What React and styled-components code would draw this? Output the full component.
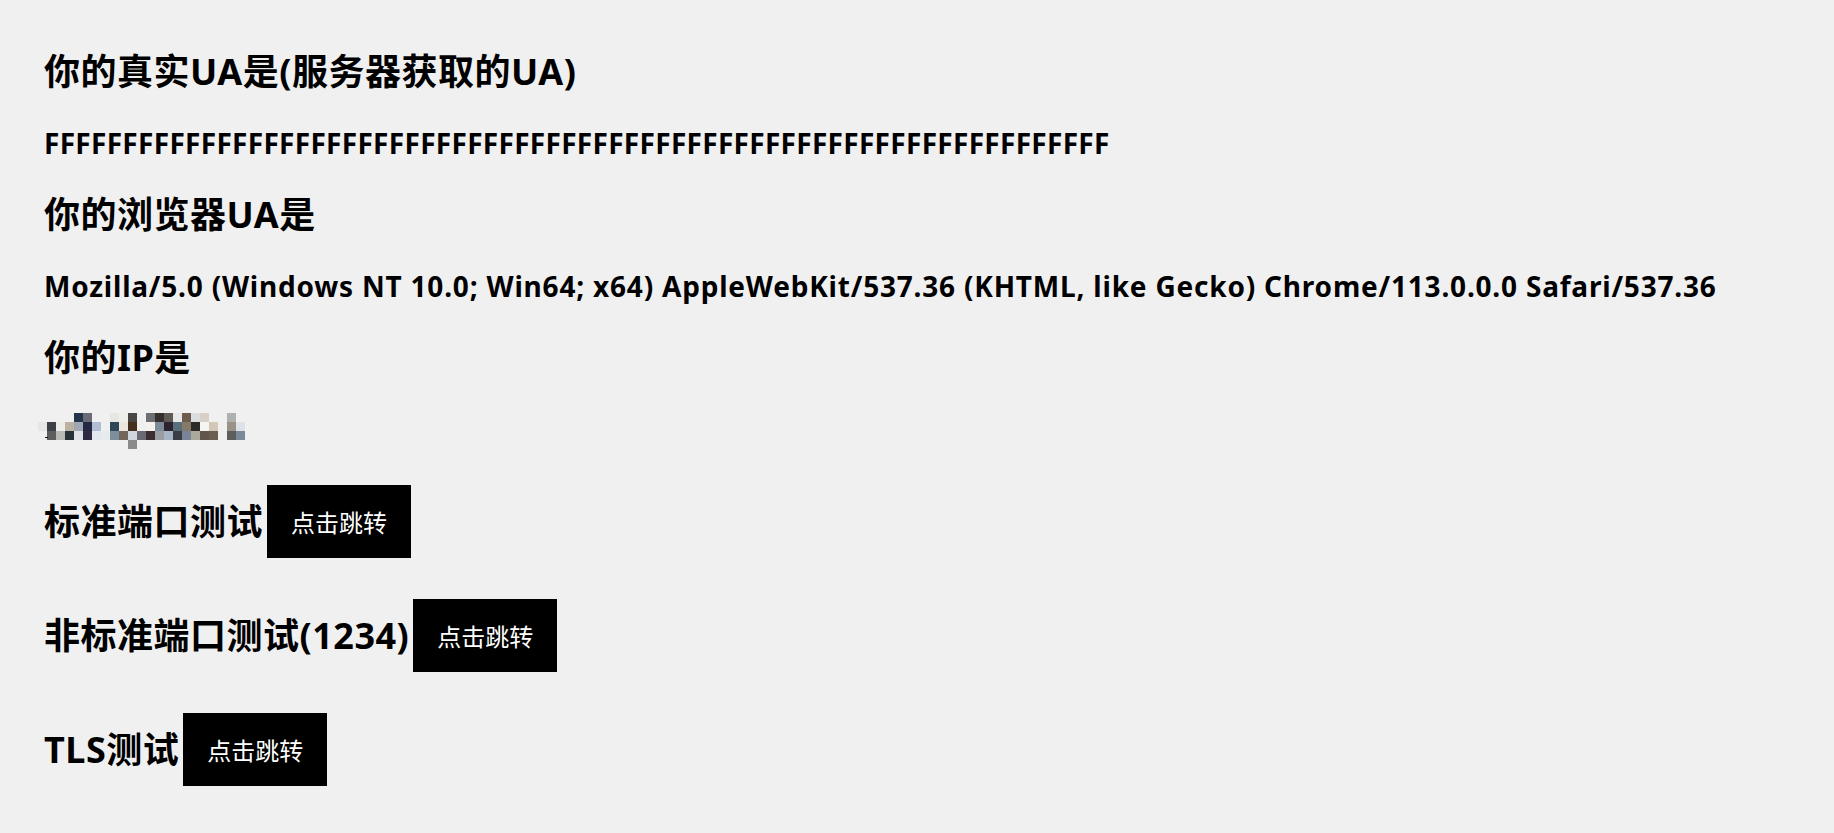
import React from "react";
import styled, { createGlobalStyle } from "styled-components";

const GlobalStyle = createGlobalStyle`
  body {
    margin: 0;
    background: #f0f0f0;
    color: #000;
    font-family: "Noto Sans", "Noto Sans CJK SC", sans-serif;
  }
`;

// pixelated (mosaic) ip address, one entry per 9px block
const mosaic = [
  [null, null, null, null, "#22354a", "#6a6b78", null, null, "#e6e6e4", "#efeee8", "#4a4644", null, "#6c7075", "#35302c", "#5e5a55", "#e8e8e8", "#6c5d4f", "#d9dde0", "#d8cfc6", null, null, "#b0b0b0", null],
  ["#e6e6e6", "#3c4047", "#ececea", "#bdb1a3", "#a0a8b4", "#242842", "#b2bcd4", null, "#2d4858", "#ece6dc", "#45301f", null, "#f5f2ee", "#7d8c99", "#2c2230", "#5a6f7c", "#857a6a", "#2b2b2a", "#f4f4f2", "#d3c7b7", null, "#9a9188", "#dce2e8"],
  [null, "#5e5e5e", "#b9b9b5", "#283038", "#dfe3e8", "#2d2a42", "#e2e8ee", "#e6ebee", "#7c8e9a", "#72665a", "#d0d6de", "#6a6a74", "#3c2e30", "#9a9ea2", "#a8b4c8", "#383c44", "#7a8498", "#aca89e", "#62564c", "#6a5e50", null, "#5e5e5e", "#7a8a9a"],
  [null, null, null, null, null, null, null, null, null, null, "#8a8a8a"],
];

const BLOCK = 9;

const tests = [
  { label: "标准端口测试", href: "#" },
  { label: "非标准端口测试(1234)", href: "#" },
  { label: "TLS测试", href: "#" },
];

const App = () => {
  return (
    <>
      <GlobalStyle />
      <Page>
        <Info>
          <Title>你的真实UA是(服务器获取的UA)</Title>
          <Value spacing={0.3}>{"F".repeat(68)}</Value>
        </Info>
        <Info>
          <Title>你的浏览器UA是</Title>
          <Value spacing={0.8}>
            Mozilla/5.0 (Windows NT 10.0; Win64; x64) AppleWebKit/537.36 (KHTML,
            like Gecko) Chrome/113.0.0.0 Safari/537.36
          </Value>
        </Info>
        <Info>
          <Title>你的IP是</Title>
          <Mosaic
            width={23 * BLOCK}
            height={4 * BLOCK}
            viewBox={`0 0 ${23 * BLOCK} ${4 * BLOCK}`}
          >
            {mosaic.map((row, r) =>
              row.map((c, i) =>
                c ? (
                  <rect
                    key={`${r}-${i}`}
                    x={i * BLOCK}
                    y={r * BLOCK}
                    width={BLOCK}
                    height={BLOCK}
                    fill={c}
                  />
                ) : null
              )
            )}
            <rect x="7" y="24" width="3" height="1" fill="#111" />
          </Mosaic>
        </Info>
        <TestList>
          {tests.map((t) => (
            <TestRow key={t.label}>
              <Title>{t.label}</Title>
              <JumpButton>点击跳转</JumpButton>
            </TestRow>
          ))}
        </TestList>
      </Page>
    </>
  );
};

export default App;

const Page = styled.div`
  display: flex;
  flex-direction: column;
  gap: 32px;
  padding: 48px 0 40px 44px;
`;

const Info = styled.section`
  display: flex;
  flex-direction: column;
  align-items: flex-start;
  gap: 31px;
`;

const Title = styled.h2`
  margin: 0;
  font-size: 36px;
  line-height: 48px;
  font-weight: 700;
  letter-spacing: 0.5px;
  white-space: nowrap;
`;

const Value = styled.p`
  margin: 0;
  font-size: 28px;
  line-height: 32px;
  font-weight: 700;
  letter-spacing: ${(props) => props.spacing || 0}px;
  white-space: nowrap;
`;

const Mosaic = styled.svg`
  display: block;
  margin-left: -6px;
`;

const TestList = styled.div`
  display: flex;
  flex-direction: column;
  gap: 41px;
  margin-top: 4px;
`;

const TestRow = styled.div`
  display: flex;
  align-items: center;
  gap: 4px;
`;

const JumpButton = styled.button`
  height: 73px;
  padding: 0 24px;
  border: none;
  background: #000;
  color: #fff;
  font-family: "Noto Sans", "Noto Sans CJK SC", sans-serif;
  font-size: 24px;
  cursor: pointer;
`;
